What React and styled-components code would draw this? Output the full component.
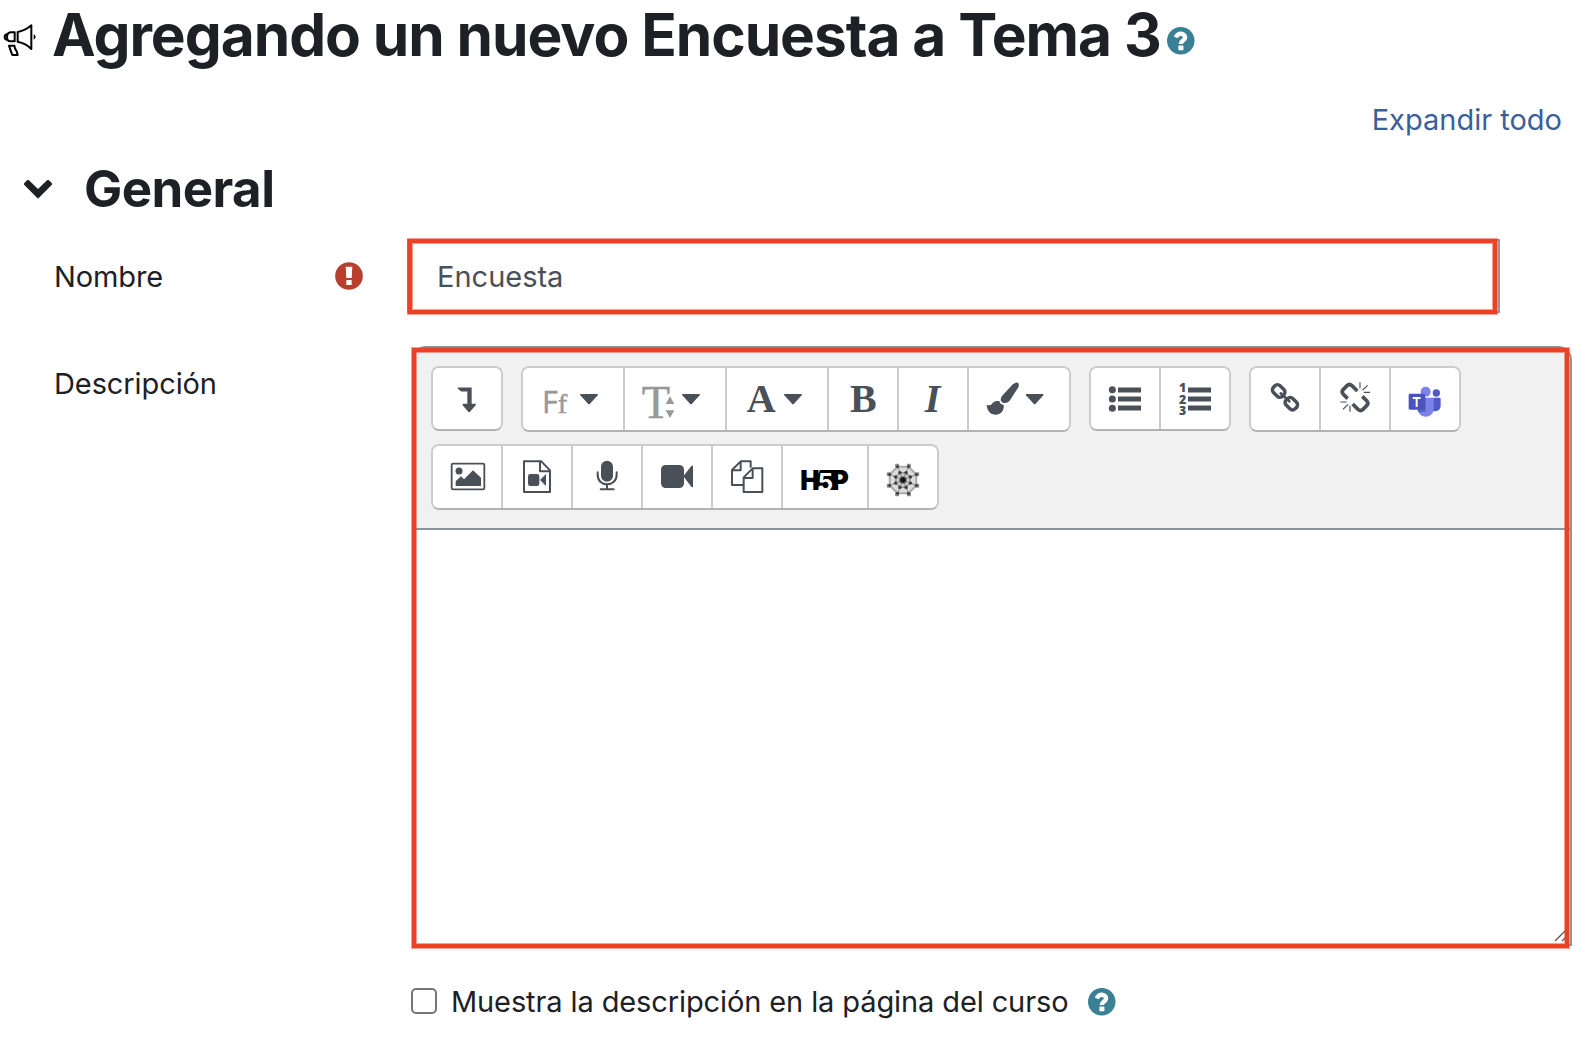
import React from 'react';
import styled, { createGlobalStyle } from 'styled-components';

const Color = {
  TEXT: '#1d2125',
  INPUT: '#495057',
  ICON: '#495057',
  MUTED: '#999',
  LINK: '#3a5f9b',
  BORDER: '#8f959e',
  BUTTON_BORDER: '#ccc',
  BUTTON_BORDER_BOTTOM: '#b3b3b3',
  TOOLBAR: '#f1f1f1',
  HELP: '#398094',
  DANGER: '#b93e2d',
  MARK: '#eb4226',
  MARK_SOFT: 'rgba(235, 66, 38, 0.5)',
};

const GlobalStyle = createGlobalStyle`
  * {
    box-sizing: border-box;
  }

  body {
    margin: 0;
    background: #fff;
    color: ${Color.TEXT};
    font-family: Inter, 'Liberation Sans', sans-serif;
    font-size: 29px;
  }

  svg {
    display: block;
    flex: none;
    overflow: visible;
  }
`;

const Page = styled.main`
  width: 1586px;
  height: 1038px;
  overflow: hidden;
`;

const Header = styled.header`
  display: flex;
  align-items: center;
  height: 70px;
  padding-left: 3px;
`;

const HeaderIcon = styled.span`
  margin-top: 9px;
`;

const Title = styled.h1`
  margin: 0 0 0 15px;
  font-size: 58.6px;
  font-weight: 700;
  line-height: 70px;
  letter-spacing: -1.02px;
  white-space: nowrap;
`;

const TitleHelp = styled.span`
  margin: 11px 0 0 6px;
`;

const ExpandRow = styled.div`
  display: flex;
  justify-content: flex-end;
  height: 58px;
  margin-top: 20px;
  padding-right: 24px;
  line-height: 59px;
`;

const ExpandLink = styled.a`
  color: ${Color.LINK};
`;

const SectionHeader = styled.div`
  display: flex;
  align-items: center;
  height: 80px;
  padding: 2px 0 0 22px;
`;

const SectionTitle = styled.h2`
  margin: 0 0 0 30px;
  font-size: 51px;
  font-weight: 700;
  line-height: 78px;
  letter-spacing: -0.55px;
`;

const Row = styled.div`
  display: grid;
  grid-template-columns: ${(p) => p.$label || 412}px ${(p) => p.$field}px;
  margin-top: ${(p) => p.$top}px;
`;

const Label = styled.label`
  display: flex;
  align-items: center;
  justify-content: space-between;
  height: 75px;
  padding: 0 44px 0 54px;
  letter-spacing: -0.1px;

  svg {
    margin-bottom: 2px;
  }
`;

const Field = styled.div`
  position: relative;
`;

const Input = styled.div`
  height: 74px;
  padding-left: 28px;
  border: 2px solid ${Color.BORDER};
  color: ${Color.INPUT};
  line-height: 72px;
`;

// red frame laid over a field
const Mark = styled.div`
  position: absolute;
  top: ${(p) => p.$top}px;
  right: ${(p) => p.$right}px;
  bottom: ${(p) => p.$bottom}px;
  left: ${(p) => p.$left}px;
  border: 4px solid ${Color.MARK};
  box-shadow: 0 0 0 1px ${Color.MARK_SOFT}, inset 0 0 0 1px ${Color.MARK_SOFT};
`;

const Editor = styled.div`
  display: flex;
  flex-direction: column;
  height: 600px;
  border: 2px solid ${Color.BORDER};
  border-radius: 14px 14px 0 0;
  overflow: hidden;
`;

const Toolbar = styled.div`
  display: flex;
  flex-wrap: wrap;
  align-items: flex-start;
  align-content: flex-start;
  gap: 12px 18px;
  height: 182px;
  padding: 18px 17px;
  border-bottom: 2px solid ${Color.BORDER};
  background: ${Color.TOOLBAR};
`;

const Group = styled.div`
  display: flex;
  height: ${(p) => (p.$short ? 65 : 66)}px;
  border: 2px solid ${Color.BUTTON_BORDER};
  border-bottom-color: ${Color.BUTTON_BORDER_BOTTOM};
  border-radius: 8px;
  background: #fff;
  overflow: hidden;
`;

const Button = styled.button`
  display: flex;
  align-items: center;
  justify-content: center;
  box-sizing: content-box;
  width: ${(p) => p.$width || 68}px;
  padding: 0;
  border: 0;
  background: #fff;
  color: ${Color.ICON};

  & + & {
    border-left: 2px solid ${Color.BUTTON_BORDER};
  }
`;

const TextArea = styled.div`
  display: flex;
  flex: 1;
  align-items: flex-end;
  justify-content: flex-end;
  padding: 0 3px 2px 0;
  background: #fff;
`;

const CheckRow = styled.div`
  display: flex;
  align-items: center;
  height: 60px;
  margin: 25px 0 0 411px;
`;

const Checkbox = styled.span`
  width: 26px;
  height: 26px;
  border: 2px solid #767676;
  border-radius: 5px;
`;

const CheckLabel = styled.span`
  margin: 2px 20px 0 14px;
  line-height: 58px;
  letter-spacing: -0.11px;
  white-space: nowrap;
`;

const CheckHelp = styled.span`
  margin-top: 2px;
`;

// drawings use three units to one pixel
const Icon = ({ x, y, w = 108, h = 108, children }) => (
  <svg
    width={w / 3}
    height={h / 3}
    viewBox={`${x} ${y} ${w} ${h}`}
    fill="currentColor"
    aria-hidden="true"
  >
    {children}
  </svg>
);

const Caret = ({ x }) => (
  <path d={`M${x + 2} 162H${x + 52}Q${x + 55} 163 ${x + 53} 166L${x + 30} 191Q${x + 27} 194 ${x + 24} 191L${x + 1} 166Q${x - 1} 163 ${x + 2} 162Z`} />
);

const HelpIcon = () => (
  <svg width="27.5" height="27.5" viewBox="0 0 82 82" aria-hidden="true">
    <circle cx="41" cy="41" r="41" fill={Color.HELP} />
    <path
      d="M26 31C31 21 36 20 41 20C49 20 54 25 54 31C54 41 41 40 41 51"
      fill="none"
      stroke="#fff"
      strokeWidth="13"
    />
    <rect x="34" y="55" width="15" height="14" rx="1" fill="#fff" />
  </svg>
);

const RequiredIcon = () => (
  <svg width="28" height="28" viewBox="0 0 84 84" aria-hidden="true">
    <circle cx="42" cy="42" r="41.5" fill={Color.DANGER} />
    <path d="M32 14H52L50 48H34Z" fill="#fff" />
    <rect x="34" y="54" width="16" height="15" rx="1" fill="#fff" />
  </svg>
);

const MegaphoneIcon = () => (
  <svg width="34" height="34" viewBox="9 69 102 102" aria-hidden="true">
    <g fill="none" stroke="#000" strokeWidth="6" strokeLinejoin="round">
      <path d="M44 97H31Q21 99 21 110Q21 124 31 124H44Z" />
      <path d="M23 102Q14 103 14 111Q14 119 22 119" />
      <path d="M53 96Q78 91 94 76V147Q78 130 53 125Z" />
      <path d="M27 137H43Q44 147 50 154L53 165H37Q31 150 27 137Z" />
    </g>
    <path d="M101 103Q113 111 101 119Z" />
  </svg>
);

const ChevronIcon = () => (
  <svg width="32" height="24" viewBox="66 532 96 72" fill={Color.TEXT} aria-hidden="true">
    <path d="M111 594L73 556Q70 553 73 550L81 542Q84 540 87 542L114 568L141 542Q144 540 147 542L155 550Q158 553 155 556L117 594Q114 597 111 594Z" />
  </svg>
);

const IndentIcon = () => (
  <Icon x={147} y={121.5}>
    <path d="M175 141H215V190H226Q229 191 227 194L210 214Q208 217 205 214L188 194Q186 191 189 190H202V153H184Q182 153 181 151L173 144Q173 141 175 141Z" />
  </Icon>
);

const FontIcon = () => (
  <Icon x={393} y={123} w={252}>
    <g fill={Color.MUTED} stroke={Color.MUTED} strokeWidth="1.5">
      <text x="426" y="219" fontFamily="Open Sans" fontSize="92">F</text>
      <text x="473" y="219" fontFamily="Liberation Serif" fontSize="85">f</text>
    </g>
    <Caret x={540} />
  </Icon>
);

const SizeIcon = () => (
  <Icon x={699} y={117} w={252} h={120}>
    <g fill={Color.MUTED}>
      <text x="725" y="234" fontFamily="Liberation Serif" fontSize="139" stroke={Color.MUTED} strokeWidth="1.5">T</text>
      <path d="M794 194V173L809 160L826 194Z" fill="#fff" />
      <path d="M797 192L810 169L823 192ZM797 211H823L810 234Z" />
    </g>
    <Caret x={846} />
  </Icon>
);

const ColorIcon = () => (
  <Icon x={-15} y={123} w={252}>
    <text x="20" y="216" fontFamily="Liberation Serif" fontWeight="700" fontSize="120">A</text>
    <Caret x={132} />
  </Icon>
);

const BoldIcon = () => (
  <Icon x={315} y={123}>
    <text x="330" y="216" fontFamily="Liberation Serif" fontWeight="700" fontSize="120">B</text>
  </Icon>
);

const ItalicIcon = () => (
  <Icon x={525} y={123}>
    <text x="554" y="216" fontFamily="Liberation Serif" fontWeight="700" fontStyle="italic" fontSize="120">I</text>
  </Icon>
);

const BrushIcon = () => (
  <Icon x={712} y={123} w={252}>
    <path d="M829 128C838 126 839 134 836 142L813 178C806 189 797 191 790 188C782 184 781 177 787 168L818 134C822 130 825 129 829 128Z" />
    <path d="M741 194C749 198 755 195 759 189C764 183 772 182 779 183C780 190 785 194 792 195C794 212 784 224 768 224C752 224 742 212 741 194Z" />
    <Caret x={858} />
  </Icon>
);

const Bars = ({ x }) => (
  <path d={`M${x} 141h69v15h-69zM${x} 168h69v15h-69zM${x} 195h69v15h-69z`} />
);

const BulletsIcon = () => (
  <Icon x={111} y={121.5}>
    <circle cx="127" cy="148" r="10.5" />
    <circle cx="127" cy="175.5" r="10.5" />
    <circle cx="127" cy="203" r="10.5" />
    <Bars x={144} />
  </Icon>
);

const NumbersIcon = () => (
  <Icon x={321} y={121.5}>
    <g fontFamily="Open Sans" fontWeight="800" fontSize="37">
      <text x="327" y="155">1</text>
      <text x="327" y="189">2</text>
      <text x="327" y="222">3</text>
    </g>
    <Bars x={354} />
  </Icon>
);

const LinkIcon = () => (
  <Icon x={591} y={123}>
    <g fill="none" stroke="currentColor" strokeWidth="10.5">
      <rect x="-19" y="-14" width="38" height="28" rx="11" transform="translate(626 153) rotate(45)" />
      <rect x="-19" y="-14" width="38" height="28" rx="11" transform="translate(664 191) rotate(45)" />
      <path d="M632 160L658 184" strokeWidth="8" strokeLinecap="round" />
    </g>
  </Icon>
);

const UnlinkIcon = () => (
  <Icon x={801} y={123}>
    <g fill="none" stroke="currentColor" strokeWidth="11">
      <path d="M833 176L820 163Q813 155 820 148L831 137Q838 130 846 137L862 153" />
      <path d="M877 169L890 182Q897 190 890 197L879 208Q872 215 864 208L848 192" />
      <path
        d="M870 127V145M893 136L878 150M881 157H900M840 215V197M819 208L834 193M830 186H811"
        strokeWidth="3.5"
      />
    </g>
  </Icon>
);

const TeamsIcon = () => (
  <Icon x={1012} y={121} h={112}>
    <circle cx="1100" cy="160" r="11" fill="#5059c9" />
    <path d="M1088 174H1109Q1113 174 1113 178V197C1113 211 1104 217 1088 214Z" fill="#5059c9" />
    <circle cx="1068" cy="156" r="15" fill="#7b83eb" />
    <path d="M1044 174H1088Q1092 174 1092 178V205C1092 223 1081 231 1068 231C1055 231 1044 222 1044 205Z" fill="#7b83eb" />
    <path d="M1044 174H1068V217H1046Q1044 212 1044 205Z" fill="#5a62c3" />
    <rect x="1017" y="162" width="49" height="48" rx="4" fill="#4b53bc" />
    <path d="M1029 172H1053V178H1044V202H1038V178H1029Z" fill="#fff" />
  </Icon>
);

const ImageIcon = () => (
  <Icon x={147} y={357}>
    <rect x="155" y="371" width="98" height="77" rx="4" fill="none" stroke="currentColor" strokeWidth="5.5" />
    <circle cx="177" cy="393" r="10.5" />
    <path d="M167 424L183 409L192 418L219 391L243 413V438H167Z" />
  </Icon>
);

const MediaIcon = () => (
  <Icon x={357} y={357}>
    <path
      d="M372 364H424L450 391V456H372ZM420 364V394H450"
      fill="none"
      stroke="currentColor"
      strokeWidth="6"
      strokeLinejoin="round"
    />
    <rect x="384" y="402" width="34" height="36" rx="7" />
    <path d="M420 420L438 402V438Z" />
  </Icon>
);

const MicIcon = () => (
  <Icon x={567} y={357}>
    <rect x="603" y="362" width="36" height="63" rx="18" />
    <path
      d="M593 397V404C593 422 605 433 621 433S650 422 650 404V397M621 433V448M602 448H641"
      fill="none"
      stroke="currentColor"
      strokeWidth="6"
      strokeLinecap="round"
    />
  </Icon>
);

const VideoIcon = () => (
  <Icon x={777} y={357}>
    <rect x="783" y="375" width="69" height="69" rx="14" />
    <path d="M850 409L874 378Q879 374 879 380V438Q879 444 874 440Z" />
  </Icon>
);

const FilesIcon = () => (
  <Icon x={267} y={72}>
    <g fill="none" stroke="currentColor" strokeWidth="6" strokeLinejoin="round">
      <path d="M309 150H276V105L302 79H332V98M302 79V106H276" />
      <path d="M311 127L338 100H367V171H311ZM338 100V129H311" />
    </g>
  </Icon>
);

const H5pIcon = () => (
  <Icon x={484} y={69} w={144} h={114}>
    <g fontFamily="Inter" fontWeight="900" fill="#000">
      <path d="M541 105H588V165H573L528 152V131Z" />
      <text x="482" y="165" fontSize="82" textLength="58" lengthAdjust="spacingAndGlyphs">H</text>
      <text x="576" y="165" fontSize="82" textLength="51" lengthAdjust="spacingAndGlyphs">P</text>
      <text x="534" y="168" fontSize="72" fontWeight="700" fill="#fff">5</text>
    </g>
  </Icon>
);

const ring = (r) =>
  Array.from({ length: 8 }, (_, i) => {
    const a = ((i + 0.5) * Math.PI) / 4;
    return [789 + r * Math.cos(a), 135 + r * Math.sin(a)];
  });

const WebIcon = () => (
  <Icon x={735} y={66} h={120}>
    <polygon points={ring(43).join(' ')} fill="#dcdcdc" stroke="#aaa" strokeWidth="6" />
    <polygon points={ring(23).join(' ')} fill="#d0d0d0" stroke="#999" strokeWidth="5" />
    {ring(48).map(([x, y]) => (
      <line key={x + y} x1="789" y1="135" x2={x} y2={y} stroke="#999" strokeWidth="4" />
    ))}
    {ring(46).map(([x, y]) => (
      <rect key={x + y} x={x - 6} y={y - 6} width="12" height="12" rx="3" fill="#888" />
    ))}
    {ring(43).map(([x, y]) => <circle key={x + y} cx={x} cy={y} r="4" fill="#333" />)}
    {ring(24).map(([x, y]) => <circle key={x + y} cx={x} cy={y} r="5" fill="#3a3a3a" />)}
    <circle cx="789" cy="135" r="12" fill="#777" />
    <circle cx="789" cy="135" r="8" fill="#111" />
  </Icon>
);

const groups = [
  { short: true, buttons: [[IndentIcon]] },
  {
    buttons: [
      [FontIcon, 100],
      [SizeIcon, 100],
      [ColorIcon, 100],
      [BoldIcon],
      [ItalicIcon],
      [BrushIcon, 100],
    ],
  },
  { short: true, buttons: [[BulletsIcon], [NumbersIcon]] },
  { buttons: [[LinkIcon], [UnlinkIcon], [TeamsIcon]] },
  {
    buttons: [
      [ImageIcon],
      [MediaIcon],
      [MicIcon],
      [VideoIcon],
      [FilesIcon],
      [H5pIcon, 84],
      [WebIcon],
    ],
  },
];

export default () => (
  <Page>
    <GlobalStyle />
    <Header>
      <HeaderIcon><MegaphoneIcon /></HeaderIcon>
      <Title>Agregando un nuevo Encuesta a Tema 3</Title>
      <TitleHelp><HelpIcon /></TitleHelp>
    </Header>
    <ExpandRow>
      <ExpandLink>Expandir todo</ExpandLink>
    </ExpandRow>
    <SectionHeader>
      <ChevronIcon />
      <SectionTitle>General</SectionTitle>
    </SectionHeader>
    <Row $label={407} $field={1093} $top={11}>
      <Label>
        Nombre
        <RequiredIcon />
      </Label>
      <Field>
        <Input>Encuesta</Input>
        <Mark $top={0} $right={3} $bottom={0} $left={1} />
      </Field>
    </Row>
    <Row $field={1160} $top={32}>
      <Label>Descripción</Label>
      <Field>
        <Editor>
          <Toolbar>
            {groups.map((group, i) => (
              <Group key={i} $short={group.short}>
                {group.buttons.map(([Glyph, width], j) => (
                  <Button key={j} $width={width}>
                    <Glyph />
                  </Button>
                ))}
              </Group>
            ))}
          </Toolbar>
          <TextArea>
            <svg width="13" height="13" fill="none" stroke="#555" aria-hidden="true">
              <path d="M1 12L12 1M8 12L12 8" strokeWidth="1.3" />
            </svg>
          </TextArea>
        </Editor>
        <Mark $top={2} $right={3} $bottom={-2} $left={0} />
      </Field>
    </Row>
    <CheckRow>
      <Checkbox />
      <CheckLabel>Muestra la descripción en la página del curso</CheckLabel>
      <CheckHelp><HelpIcon /></CheckHelp>
    </CheckRow>
  </Page>
);
